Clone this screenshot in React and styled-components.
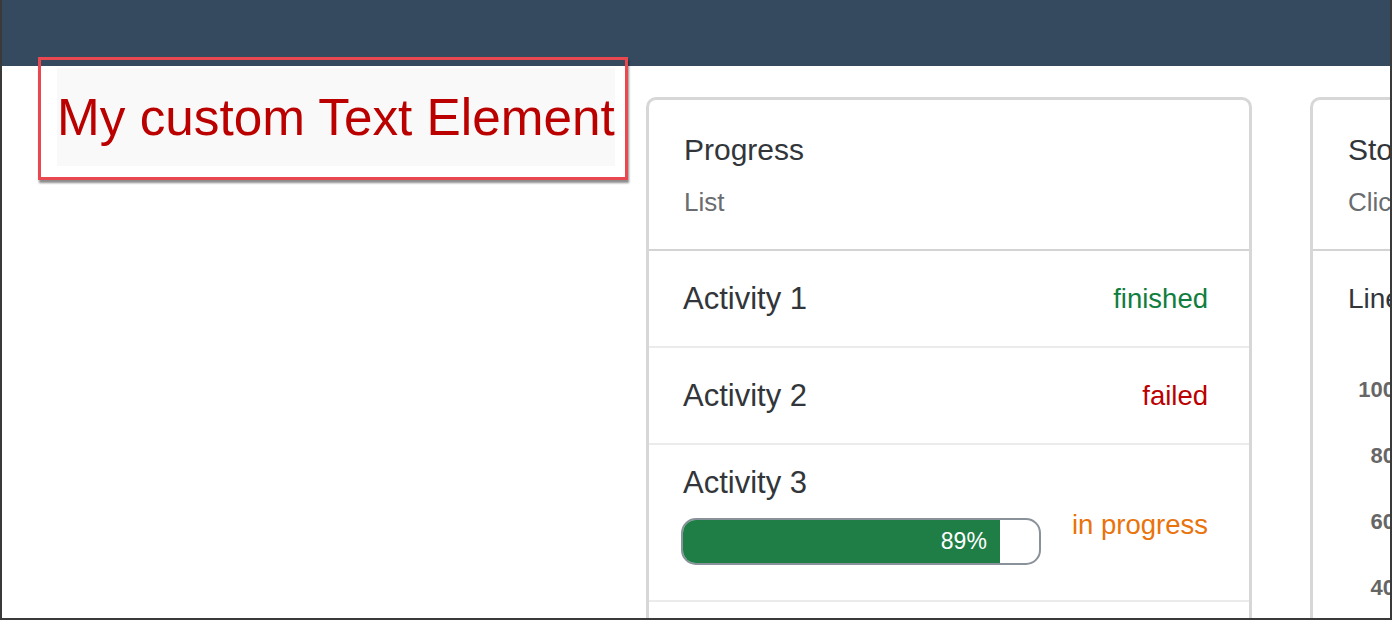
import styled, { createGlobalStyle } from "styled-components";

// page reset
const GlobalStyle = createGlobalStyle`
  html, body {
    margin: 0;
    padding: 0;
    background: #ffffff;
    overflow: hidden;
  }
  * {
    box-sizing: border-box;
  }
`;

// screenshot frame
const Frame = styled.div`
  width: 1392px;
  height: 620px;
  overflow: hidden;
  border: 2px solid #3a3a3a;
  border-top: none;
  background: #ffffff;
  font-family: "Liberation Sans", Arial, sans-serif;
  color: #32363a;
`;

const ShellBar = styled.div`
  height: 66px;
  background: #354a5f;
`;

const Main = styled.div`
  display: flex;
  align-items: flex-start;
  padding-left: 55px;
`;

// custom text element with the selection outline
const TextElement = styled.div`
  position: relative;
  flex-shrink: 0;
  width: 558px;
  margin-top: 2px;
  height: 98px;
  line-height: 100px;
  background: #f9f9f9;
  color: #bb0000;
  font-size: 51.3px;
  white-space: nowrap;

  &::after {
    content: "";
    position: absolute;
    top: -11px;
    left: -19px;
    right: -13px;
    bottom: -14px;
    border: 3px solid #ea4850;
    box-shadow: 1px 3px 2px rgba(0, 0, 0, 0.45);
    pointer-events: none;
  }
`;

const Cards = styled.div`
  display: flex;
  gap: 58px;
  margin-left: 31px;
  margin-top: 31px;
`;

const Card = styled.div`
  flex-shrink: 0;
  width: 606px;
  height: 560px;
  border: 3px solid #d7d7d7;
  border-radius: 10px;
  overflow: hidden;
  background: #ffffff;
`;

const CardHeader = styled.div`
  padding: 32px 32px 32px 35px;
  border-bottom: 2px solid #d3d3d3;
`;

const Title = styled.div`
  font-size: 30px;
  line-height: 36px;
  color: #32363a;
  white-space: nowrap;
`;

const Subtitle = styled.div`
  margin-top: 19px;
  font-size: 26px;
  line-height: 30px;
  color: #6a6d70;
  white-space: nowrap;
`;

const Row = styled.div`
  display: flex;
  align-items: ${(p) => (p.top ? "flex-start" : "center")};
  justify-content: space-between;
  height: ${(p) => p.h}px;
  padding: ${(p) => (p.top ? "20px" : "0")} 41px 0 32px;
  border-bottom: 2px solid #ebebeb;
`;

const Name = styled.div`
  font-size: 31px;
  line-height: 36px;
  color: #32363a;
  padding-left: 2px;
`;

const Status = styled.div`
  font-size: 27.5px;
  line-height: 34px;
  color: ${(p) => p.color};
  margin-top: ${(p) => p.offset || 0}px;
`;

const Column = styled.div`
  display: flex;
  flex-direction: column;
`;

const Bar = styled.div`
  margin-top: 17px;
  width: 360px;
  height: 47px;
  border: 2px solid #89919a;
  border-radius: 15px;
  overflow: hidden;
  background: #ffffff;
`;

const Fill = styled.div`
  height: 100%;
  background: #1e7e45;
  color: #ffffff;
  font-size: 23px;
  line-height: 43px;
  text-align: right;
  padding-right: 13px;
`;

// chart card body
const ChartBody = styled.div`
  padding: 30px 0 0 35px;
`;

const ChartTitle = styled.div`
  font-size: 28px;
  line-height: 36px;
  color: #32363a;
  white-space: nowrap;
`;

const Axis = styled.div`
  display: flex;
  flex-direction: column;
  gap: 40px;
  width: 47px;
  margin-top: 60px;
`;

const Tick = styled.div`
  height: 26px;
  line-height: 26px;
  font-size: 22px;
  font-weight: bold;
  color: #666666;
  text-align: right;
  white-space: nowrap;
`;

const activities = [
  { name: "Activity 1", status: "finished", color: "#107e3e" },
  { name: "Activity 2", status: "failed", color: "#bb0000" },
];

const percent = 89;

export default function App() {
  return (
    <>
      <GlobalStyle />
      <Frame>
        <ShellBar />
        <Main>
          <TextElement>My custom Text Element</TextElement>
          <Cards>
            <Card>
              <CardHeader>
                <Title>Progress</Title>
                <Subtitle>List</Subtitle>
              </CardHeader>
              {activities.map((a) => (
                <Row h={97} key={a.name}>
                  <Name>{a.name}</Name>
                  <Status color={a.color}>{a.status}</Status>
                </Row>
              ))}
              <Row h={157} top>
                <Column>
                  <Name>Activity 3</Name>
                  <Bar>
                    <Fill style={{ width: `${percent}%` }}>{percent}%</Fill>
                  </Bar>
                </Column>
                <Status color="#e9730c" offset={43}>
                  in progress
                </Status>
              </Row>
            </Card>
            <Card>
              <CardHeader>
                <Title>Stock Chart</Title>
                <Subtitle>Click for details</Subtitle>
              </CardHeader>
              <ChartBody>
                <ChartTitle>Line Chart</ChartTitle>
                <Axis>
                  <Tick>100</Tick>
                  <Tick>80</Tick>
                  <Tick>60</Tick>
                  <Tick>40</Tick>
                </Axis>
              </ChartBody>
            </Card>
          </Cards>
        </Main>
      </Frame>
    </>
  );
}
